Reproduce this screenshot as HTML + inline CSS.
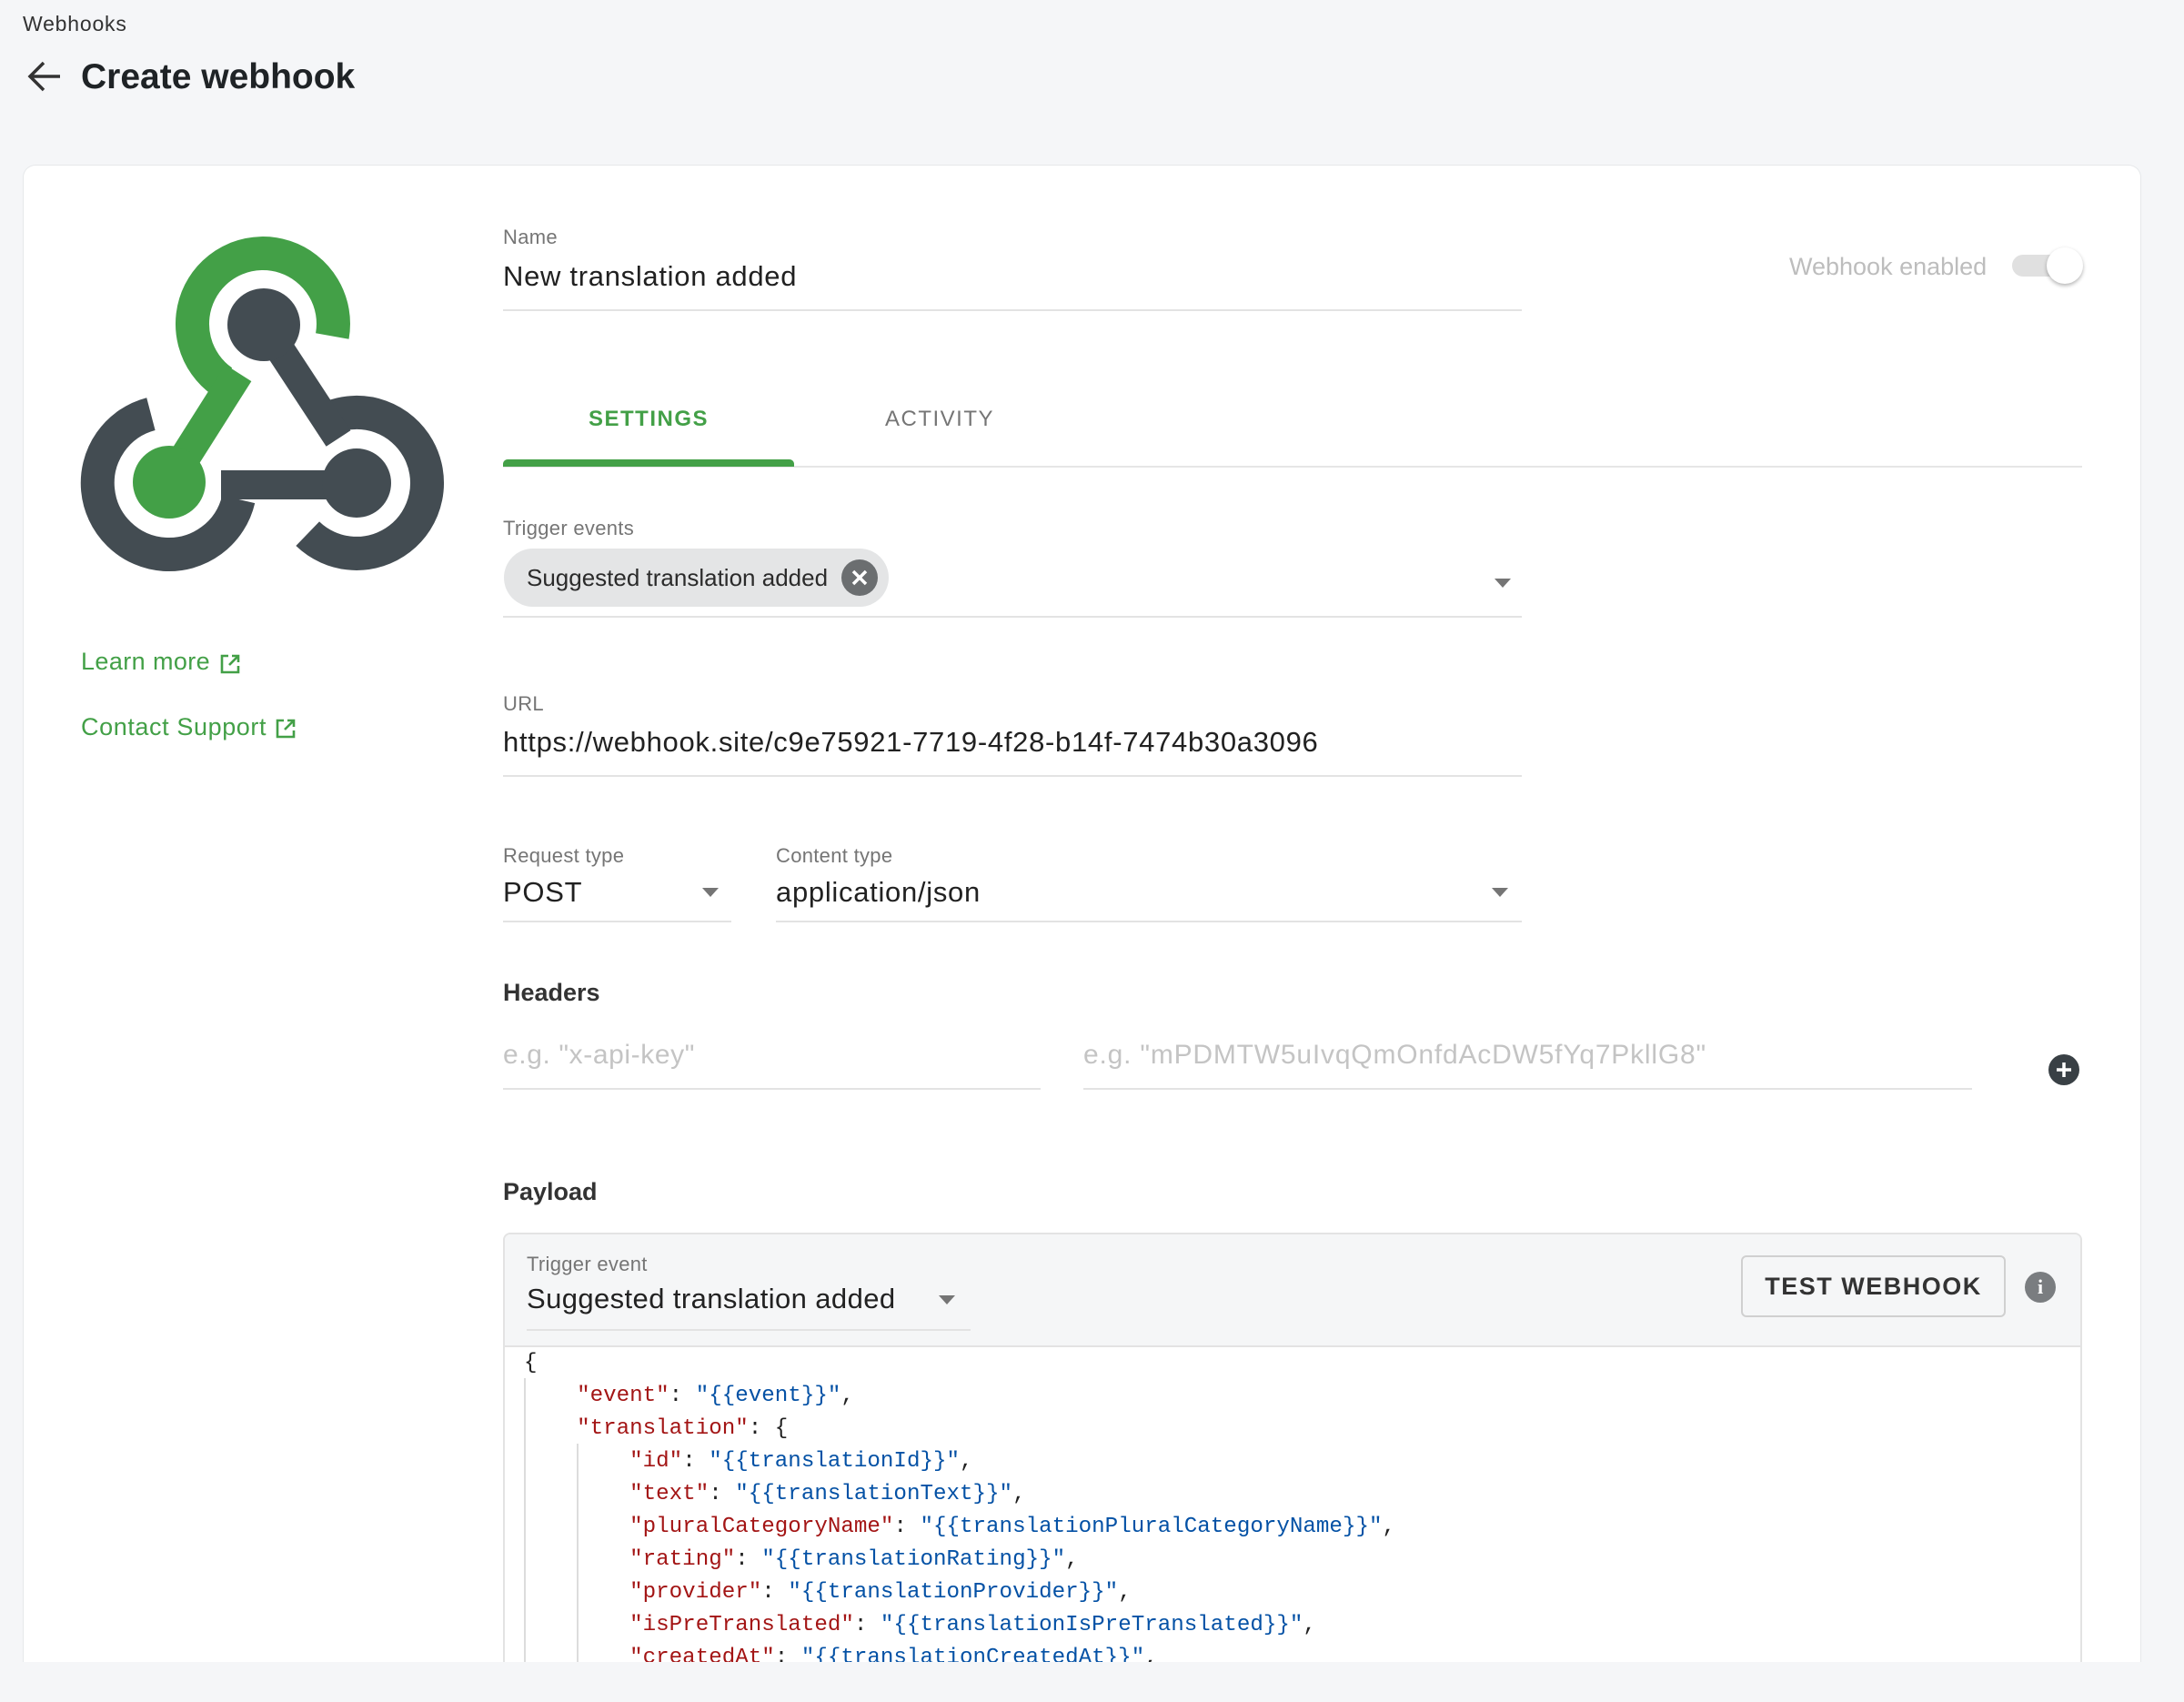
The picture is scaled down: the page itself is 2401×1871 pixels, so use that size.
<!DOCTYPE html>
<html><head><meta charset="utf-8"><style>
*{margin:0;padding:0;box-sizing:border-box}
body{width:2401px;height:1871px;background:#f5f6f8;font-family:"Liberation Sans",sans-serif;position:relative;overflow:hidden;color:#212121}
.a{position:absolute;white-space:nowrap}
.lbl{font-size:22px;color:#757575;letter-spacing:0.3px}
.val{font-size:31px;color:#212121;letter-spacing:0.7px}
.ul{position:absolute;height:2px;background:#e3e3e3}
.arr{position:absolute;width:0;height:0;border-left:9px solid transparent;border-right:9px solid transparent;border-top:10px solid #757575}
.code{position:absolute;font-family:"Liberation Mono",monospace;font-size:24.2px;white-space:pre;line-height:36px}
.k{color:#a31515}.s{color:#0451a5}
</style></head><body>
<div class="a" style="left:25px;top:13px;font-size:23px;letter-spacing:0.8px;color:#333">Webhooks</div>
<svg class="a" style="left:30px;top:66px" width="38" height="36" viewBox="0 0 38 36"><path d="M36 18H4M18 3L3 18l15 15" fill="none" stroke="#333" stroke-width="3.5"/></svg>
<div class="a" style="left:89px;top:63px;font-size:39px;font-weight:bold;color:#1f2326">Create webhook</div>

<div class="a" style="left:25px;top:181px;width:2329px;height:1646px;background:#fff;border:1px solid #e6e8ea;border-bottom:none;border-radius:14px 14px 0 0"></div>

<svg class="a" style="left:0;top:0" width="520" height="700" viewBox="0 0 520 700">
<g fill="none" stroke-width="37">
<path d="M365.3 369.5 A77.5 77.5 0 1 0 244.5 419.5" stroke="#43a047"/>
<path d="M165.9 455.1 A78.5 78.5 0 1 0 262.2 548.9" stroke="#434c52"/>
<path d="M364.2 458.6 A77.5 77.5 0 1 1 338.2 586.7" stroke="#434c52"/>
</g>
<line x1="290" y1="357" x2="372" y2="482" stroke="#434c52" stroke-width="32"/>
<line x1="262" y1="410" x2="186" y2="530" stroke="#43a047" stroke-width="34"/>
<rect x="243" y="517" width="150" height="32" fill="#434c52"/>
<circle cx="290" cy="357" r="40" fill="#434c52"/>
<circle cx="186" cy="530" r="40" fill="#43a047"/>
<circle cx="392" cy="531" r="38" fill="#434c52"/>
</svg>

<div class="a" style="left:89px;top:712px;font-size:27px;letter-spacing:0.4px;color:#43a047">Learn more</div>
<svg class="a" style="left:241px;top:718px" width="24" height="24" viewBox="0 0 24 24"><path d="M10 3H3v18h18v-7M14 3h7v7M21 3L11 13" fill="none" stroke="#43a047" stroke-width="2.6"/></svg>
<div class="a" style="left:89px;top:784px;font-size:27px;letter-spacing:0.6px;color:#43a047">Contact Support</div>
<svg class="a" style="left:302px;top:789px" width="24" height="24" viewBox="0 0 24 24"><path d="M10 3H3v18h18v-7M14 3h7v7M21 3L11 13" fill="none" stroke="#43a047" stroke-width="2.6"/></svg>

<div class="a lbl" style="left:553px;top:248px">Name</div>
<div class="a val" style="left:553px;top:286px">New translation added</div>
<div class="ul" style="left:553px;top:340px;width:1120px"></div>

<div class="a" style="left:1967px;top:278px;font-size:27px;color:#bdbdbd">Webhook enabled</div>
<div class="a" style="left:2212px;top:280px;width:70px;height:24px;border-radius:12px;background:#e0e0e0"></div>
<div class="a" style="left:2250px;top:272px;width:40px;height:40px;border-radius:50%;background:#fff;box-shadow:0 2px 4px rgba(0,0,0,.3)"></div>

<div class="a" style="left:553px;top:447px;width:320px;text-align:center;font-size:24px;font-weight:bold;letter-spacing:1.5px;color:#43a047">SETTINGS</div>
<div class="a" style="left:873px;top:447px;width:320px;text-align:center;font-size:24px;letter-spacing:1.5px;color:#757575">ACTIVITY</div>
<div class="a" style="left:553px;top:512px;width:1736px;height:2px;background:#e6e6e6"></div>
<div class="a" style="left:553px;top:505px;width:320px;height:8px;background:#43a047;border-radius:5px 5px 0 0"></div>

<div class="a lbl" style="left:553px;top:568px">Trigger events</div>
<div class="a" style="left:554px;top:603px;width:423px;height:64px;border-radius:32px;background:#e4e5e6"></div>
<div class="a" style="left:579px;top:620px;font-size:26px;color:#2b2b2b">Suggested translation added</div>
<div class="a" style="left:925px;top:615px;width:40px;height:40px;border-radius:50%;background:#6b6e70"></div>
<svg class="a" style="left:925px;top:615px" width="40" height="40"><path d="M13 13l14 14M27 13L13 27" stroke="#fff" stroke-width="3.5"/></svg>
<div class="arr" style="left:1643px;top:636px"></div>
<div class="ul" style="left:553px;top:677px;width:1120px"></div>

<div class="a lbl" style="left:553px;top:761px">URL</div>
<div class="a val" style="left:553px;top:798px">https://webhook.site/c9e75921-7719-4f28-b14f-7474b30a3096</div>
<div class="ul" style="left:553px;top:852px;width:1120px"></div>

<div class="a lbl" style="left:553px;top:928px">Request type</div>
<div class="a val" style="left:553px;top:963px">POST</div>
<div class="arr" style="left:772px;top:976px"></div>
<div class="ul" style="left:553px;top:1012px;width:251px"></div>
<div class="a lbl" style="left:853px;top:928px">Content type</div>
<div class="a val" style="left:853px;top:963px">application/json</div>
<div class="arr" style="left:1640px;top:976px"></div>
<div class="ul" style="left:853px;top:1012px;width:820px"></div>

<div class="a" style="left:553px;top:1076px;font-size:27px;font-weight:bold;color:#333">Headers</div>
<div class="a" style="left:553px;top:1143px;font-size:30px;letter-spacing:0.6px;color:#c4c4c4">e.g. "x-api-key"</div>
<div class="ul" style="left:553px;top:1196px;width:591px"></div>
<div class="a" style="left:1191px;top:1143px;font-size:30px;letter-spacing:0.8px;color:#c4c4c4">e.g. "mPDMTW5uIvqQmOnfdAcDW5fYq7PkllG8"</div>
<div class="ul" style="left:1191px;top:1196px;width:977px"></div>
<div class="a" style="left:2252px;top:1159px;width:34px;height:34px;border-radius:50%;background:#394045"></div>
<svg class="a" style="left:2252px;top:1159px" width="34" height="34"><path d="M17 9v16M9 17h16" stroke="#fff" stroke-width="3.5"/></svg>

<div class="a" style="left:553px;top:1295px;font-size:27px;font-weight:bold;color:#333">Payload</div>

<div class="a" style="left:553px;top:1355px;width:1736px;height:480px;border:2px solid #e3e3e3;border-radius:8px 8px 0 0;background:#fff;overflow:hidden">
 <div style="position:absolute;left:0;top:0;right:0;height:124px;background:#f5f6f7;border-bottom:2px solid #e3e3e3"></div>
</div>
<div class="a lbl" style="left:579px;top:1377px">Trigger event</div>
<div class="a" style="left:579px;top:1410px;font-size:31px;letter-spacing:0.4px;color:#222">Suggested translation added</div>
<div class="arr" style="left:1032px;top:1424px"></div>
<div class="ul" style="left:579px;top:1461px;width:488px"></div>
<div class="a" style="left:1914px;top:1380px;width:291px;height:68px;border:2px solid #d0d0d0;border-radius:6px;text-align:center;line-height:64px;font-size:27px;font-weight:bold;letter-spacing:1.5px;color:#333">TEST WEBHOOK</div>
<div class="a" style="left:2226px;top:1398px;width:34px;height:34px;border-radius:50%;background:#7a7d80;color:#fff;text-align:center;font-weight:bold;font-size:22px;line-height:34px;font-family:'Liberation Serif',serif">i</div>

<div class="a" style="left:576px;top:1515px;width:2px;height:312px;background:#dcdcdc"></div>
<div class="a" style="left:634px;top:1587px;width:2px;height:240px;background:#dcdcdc"></div>
<div class="code" style="left:576px;top:1481px">{
    <span class="k">"event"</span>: <span class="s">"{{event}}"</span>,
    <span class="k">"translation"</span>: {
        <span class="k">"id"</span>: <span class="s">"{{translationId}}"</span>,
        <span class="k">"text"</span>: <span class="s">"{{translationText}}"</span>,
        <span class="k">"pluralCategoryName"</span>: <span class="s">"{{translationPluralCategoryName}}"</span>,
        <span class="k">"rating"</span>: <span class="s">"{{translationRating}}"</span>,
        <span class="k">"provider"</span>: <span class="s">"{{translationProvider}}"</span>,
        <span class="k">"isPreTranslated"</span>: <span class="s">"{{translationIsPreTranslated}}"</span>,
        <span class="k">"createdAt"</span>: <span class="s">"{{translationCreatedAt}}"</span>,</div>
<div class="a" style="left:0;top:1827px;width:2401px;height:44px;background:#f5f6f8"></div>
</body></html>
